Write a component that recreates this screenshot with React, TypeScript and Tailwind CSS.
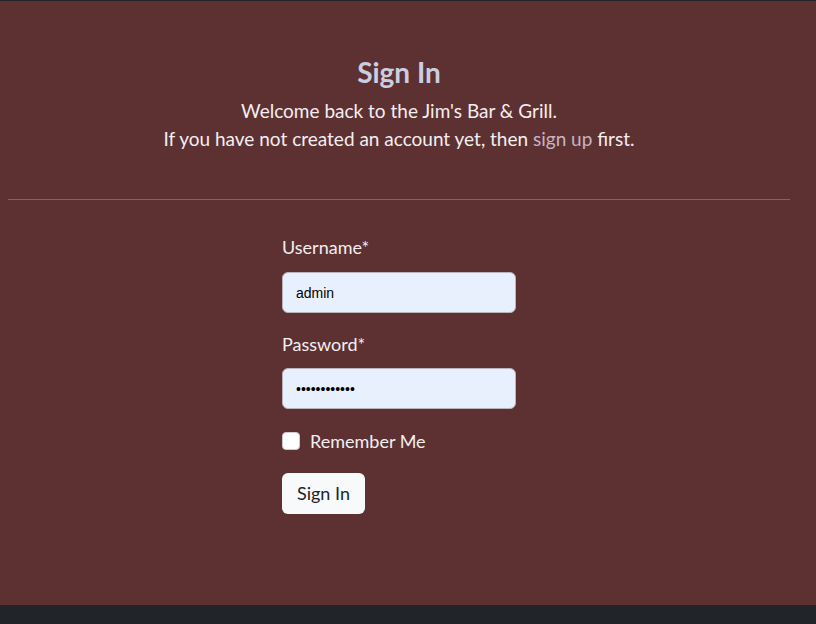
import React from 'react';

const App: React.FC = () => {
  return (
    <div className="min-h-[624px] flex flex-col bg-[#5d3132] font-['Lato',sans-serif]">
      <div className="h-px bg-[#212529]" />
      <main className="flex-grow w-[798px]">
        <section className="text-center pt-[51px] pb-[46px]">
          <h1 className="text-[28px] font-bold text-[#c9cfe0] leading-[40px]">Sign In</h1>
          <p className="mt-[5px] text-[19px] text-[#f3eef0] leading-[28px]">
            Welcome back to the Jim's Bar &amp; Grill.
            <br />
            If you have not created an account yet, then{' '}
            <a href="#" className="text-[#c6b4c0]">sign up</a> first.
          </p>
        </section>
        <hr className="mx-2 border-t border-[#8a5f60]" />
        <form className="w-[234px] mx-auto pt-[35px] flex flex-col" onSubmit={(e) => e.preventDefault()}>
          <label className="text-[18px] text-[#f3eef0] leading-[24px] mb-[13px]">Username*</label>
          <input
            defaultValue="admin"
            className="h-[41px] px-[13px] rounded-md border border-[#b9b3bd] bg-[#e8f0fe] text-[14px] text-black font-['Liberation_Sans',sans-serif] outline-none"
          />
          <label className="text-[18px] text-[#f3eef0] leading-[24px] mt-[19px] mb-[12px]">Password*</label>
          <input
            type="password"
            defaultValue="adminpass123"
            className="h-[41px] px-[13px] rounded-md border border-[#b9b3bd] bg-[#e8f0fe] text-[14px] text-black font-['Liberation_Sans',sans-serif] outline-none"
          />
          <label className="flex items-center gap-[10px] mt-[20px] text-[18px] text-[#f3eef0] leading-[24px]">
            <span className="w-[18px] h-[18px] rounded-[4px] bg-white border border-[#d0c8cc]" />
            Remember Me
          </label>
          <div className="mt-[20px]">
            <button className="h-[41px] px-[15px] rounded-md bg-[#f8f9fa] text-[18px] text-[#212529]">Sign In</button>
          </div>
        </form>
      </main>
      <footer className="h-[19px] bg-[#212529]" />
    </div>
  );
};

export default App;
